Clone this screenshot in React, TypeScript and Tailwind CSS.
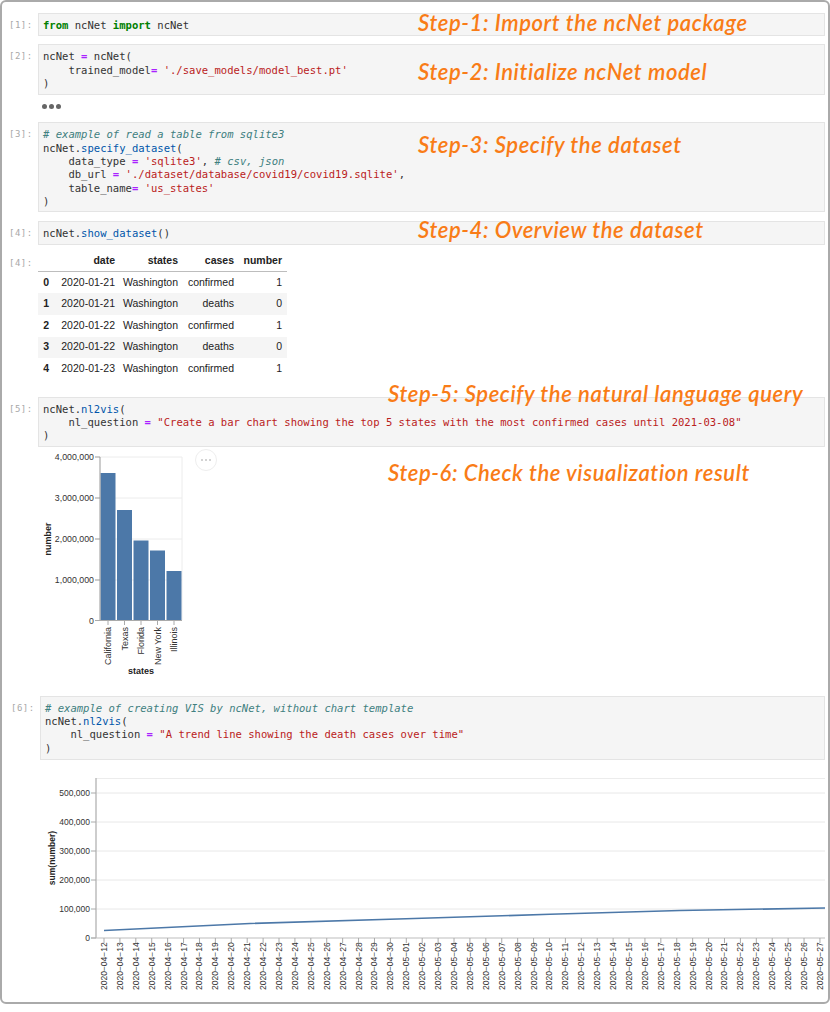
import type { ReactNode } from "react";

const rows = [
  ["0", "2020-01-21", "Washington", "confirmed", "1"],
  ["1", "2020-01-21", "Washington", "deaths", "0"],
  ["2", "2020-01-22", "Washington", "confirmed", "1"],
  ["3", "2020-01-22", "Washington", "deaths", "0"],
  ["4", "2020-01-23", "Washington", "confirmed", "1"],
];

const steps = [
  { text: "Step-1: Import the ncNet package", pos: "left-[418px] top-[10px]" },
  { text: "Step-2: Initialize ncNet model", pos: "left-[418px] top-[59px]" },
  { text: "Step-3: Specify the dataset", pos: "left-[418px] top-[132px]" },
  { text: "Step-4: Overview the dataset", pos: "left-[418px] top-[217px]" },
  { text: "Step-5: Specify the natural language query", pos: "left-[388px] top-[381px]" },
  { text: "Step-6: Check the visualization result", pos: "left-[388px] top-[460px]" },
];

const bars = [
  { name: "California", x: 100.5, w: 15, y: 473 },
  { name: "Texas", x: 117, w: 15, y: 510 },
  { name: "Florida", x: 133.5, w: 15, y: 540.5 },
  { name: "New York", x: 150, w: 15, y: 550.5 },
  { name: "Illinois", x: 166.5, w: 15, y: 571 },
];

// 04-12 .. 05-27
const dates: string[] = [];
for (let i = 0; i < 46; i++) {
  const d = new Date(Date.UTC(2020, 3, 12 + i));
  dates.push(d.toISOString().slice(0, 10).replace(/-/g, "\u2212"));
}

function Kw({ children }: { children: ReactNode }) {
  return <span className="font-bold text-[#008000]">{children}</span>;
}
function Op({ children }: { children: ReactNode }) {
  return <span className="font-bold text-[#aa22ff]">{children}</span>;
}
function Str({ children }: { children: ReactNode }) {
  return <span className="text-[#ba2121]">{children}</span>;
}
function Cm({ children }: { children: ReactNode }) {
  return <span className="italic text-[#408080]">{children}</span>;
}
function Fn({ children }: { children: ReactNode }) {
  return <span className="text-[#0055aa]">{children}</span>;
}

function Prompt({ n }: { n: number }) {
  return <div className="w-[36px] shrink-0 pt-[7px] pl-[7px] font-['DejaVu_Sans_Mono'] text-[9px] leading-[11px] tracking-[0.5px] text-[#a8a8a8]">[{n}]:</div>;
}

function Cell({ n, className, pad, children }: { n: number; className?: string; pad?: string; children: ReactNode }) {
  return (
    <div className={`flex ${className || ""}`}>
      <Prompt n={n} />
      <pre className={`flex-1 border border-[#e4e4e4] bg-[#f5f5f5] px-[4px] pt-[5px] font-['DejaVu_Sans_Mono'] text-[10.55px] leading-[13.35px] text-[#333333] ${pad || "pb-[3px]"}`}>{children}</pre>
    </div>
  );
}

function BarChart() {
  return (
    <svg width="200" height="236" viewBox="30 445 200 236" className="block font-['Liberation_Sans'] text-[#333]">
      {[457, 498, 539, 580].map((y) => <line key={y} x1="100" x2="182" y1={y} y2={y} stroke="#ececec" strokeWidth="1" />)}
      <line x1="182" x2="182" y1="457" y2="620" stroke="#ececec" />
      {bars.map((b) => <rect key={b.name} x={b.x} y={b.y} width={b.w} height={620 - b.y} fill="#4c78a8" />)}
      <line x1="100" x2="100" y1="457" y2="620" stroke="#999" />
      <line x1="95" x2="182" y1="620.5" y2="620.5" stroke="#aaa" />
      {[457, 498, 539, 580].map((y) => <line key={y} x1="95" x2="100" y1={y} y2={y} stroke="#999" />)}
      {["4,000,000", "3,000,000", "2,000,000", "1,000,000", "0"].map((t, i) => (
        <text key={t} x="94" y={460 + i * 40.9} textAnchor="end" fontSize="8.8" fill="#333">{t}</text>
      ))}
      {bars.map((b) => <line key={b.name} x1={b.x + 7.5} x2={b.x + 7.5} y1="620" y2="625" stroke="#aaa" />)}
      {bars.map((b) => (
        <text key={b.name} transform={`translate(${b.x + 10.5},627) rotate(-90)`} textAnchor="end" fontSize="9" fill="#333">{b.name}</text>
      ))}
      <text transform="translate(51,539) rotate(-90)" textAnchor="middle" fontSize="9" fontWeight="700" fill="#222">number</text>
      <text x="141" y="674" textAnchor="middle" fontSize="9" fontWeight="700" fill="#222">states</text>
    </svg>
  );
}

function LineChart() {
  const ys = [793, 822, 851, 880, 909, 938];
  return (
    <svg width="790" height="232" viewBox="40 776 790 232" className="block font-['Liberation_Sans']">
      <line x1="96" x2="825" y1="778.5" y2="778.5" stroke="#ececec" />
      {ys.slice(0, 5).map((y) => <line key={y} x1="96" x2="825" y1={y} y2={y} stroke="#e8e8e8" />)}
      <line x1="96" x2="96" y1="778" y2="938" stroke="#bdbdbd" strokeWidth="1.5" />
      <line x1="91" x2="825" y1="938" y2="938" stroke="#bdbdbd" />
      {ys.map((y, i) => (
        <g key={y}>
          <line x1="91" x2="96" y1={y} y2={y} stroke="#aaa" />
          <text x="90" y={y + 3} textAnchor="end" fontSize="8.5" fill="#333">{(500000 - i * 100000).toLocaleString("en-US")}</text>
        </g>
      ))}
      <text transform="translate(55,858) rotate(-90)" textAnchor="middle" fontSize="8.5" fontWeight="700" fill="#222">sum(number)</text>
      {dates.map((d, i) => (
        <g key={d}>
          <line x1={104 + i * 15.91} x2={104 + i * 15.91} y1="938" y2="943" stroke="#aaa" />
          <text transform={`translate(${107 + i * 15.91},990) rotate(-90)`} fontSize="8.5" fill="#333">{d}</text>
        </g>
      ))}
      <polyline points="104,930.5 250,923.5 406,918.7 550,914.3 680,910.5 825,908" fill="none" stroke="#4c78a8" strokeWidth="1.6" />
    </svg>
  );
}

export default function App() {
  return (
    <div className="relative h-[1012px] w-[830px] overflow-hidden bg-white">
      <div className="h-[1004px] rounded-[6px] border-2 border-[#aaaaaa] pt-[11px] pr-[3px]">
        <Cell n={1}>
          <Kw>from</Kw> ncNet <Kw>import</Kw> ncNet
        </Cell>

        <Cell n={2} className="mt-[8px]" pad="pb-[4px]">
          {"ncNet "}<Op>=</Op>{" ncNet(\n    trained_model"}<Op>=</Op> <Str>'./save_models/model_best.pt'</Str>{"\n)"}
        </Cell>

        <div className="ml-[40px] mt-[9px] flex h-[5px] gap-[2px]">
          <span className="size-[5px] rounded-full bg-[#666666]" />
          <span className="size-[5px] rounded-full bg-[#666666]" />
          <span className="size-[5px] rounded-full bg-[#666666]" />
        </div>

        <Cell n={3} className="mt-[13px]">
          <Cm># example of read a table from sqlite3</Cm>{"\nncNet."}<Fn>specify_dataset</Fn>{"(\n    data_type "}<Op>=</Op> <Str>'sqlite3'</Str>, <Cm># csv, json</Cm>{"\n    db_url "}<Op>=</Op> <Str>'./dataset/database/covid19/covid19.sqlite'</Str>{",\n    table_name"}<Op>=</Op> <Str>'us_states'</Str>{"\n)"}
        </Cell>

        <Cell n={4} className="mt-[9px]">
          ncNet.<Fn>show_dataset</Fn>()
        </Cell>

        <div className="mt-[6px] flex">
          <Prompt n={4} />
          <table className="w-[249px] table-fixed border-collapse font-['Liberation_Sans'] text-[10.5px] text-[#222222]">
            <colgroup>
              <col className="w-[16px]" />
              <col className="w-[66px]" />
              <col className="w-[63px]" />
              <col className="w-[56px]" />
              <col className="w-[48px]" />
            </colgroup>
            <thead>
              <tr className="h-[21px] border-b border-[#bdbdbd] text-right font-bold">
                <th />
                <th className="pr-[5px]">date</th>
                <th className="pr-[5px]">states</th>
                <th className="pr-[5px]">cases</th>
                <th className="pr-[5px]">number</th>
              </tr>
            </thead>
            <tbody>
              {rows.map((r, i) => (
                <tr key={r[0]} className={`h-[21.6px] text-right ${i % 2 === 1 ? "bg-[#f5f5f5]" : ""}`}>
                  <td className="pr-[5px] font-bold">{r[0]}</td>
                  <td className="pr-[5px]">{r[1]}</td>
                  <td className="pr-[5px]">{r[2]}</td>
                  <td className="pr-[5px]">{r[3]}</td>
                  <td className="pr-[5px]">{r[4]}</td>
                </tr>
              ))}
            </tbody>
          </table>
        </div>

        <Cell n={5} className="mt-[17px]">
          ncNet.<Fn>nl2vis</Fn>{"(\n    nl_question "}<Op>=</Op> <Str>"Create a bar chart showing the top 5 states with the most confirmed cases until 2021-03-08"</Str>{"\n)"}
        </Cell>

        <div className="relative ml-[28px] mt-[-2px] h-[236px]">
          <BarChart />
          <div className="absolute left-[165px] top-[4px] flex h-[22px] w-[22px] items-center justify-center gap-[1.5px] rounded-full border border-[#eeeeee] bg-white">
            <span className="size-[2.5px] rounded-full bg-[#c4c4c4]" />
            <span className="size-[2.5px] rounded-full bg-[#c4c4c4]" />
            <span className="size-[2.5px] rounded-full bg-[#c4c4c4]" />
          </div>
        </div>

        <Cell n={6} className="ml-[2px] mt-[15px]" pad="pb-[4px]">
          <Cm># example of creating VIS by ncNet, without chart template</Cm>{"\nncNet."}<Fn>nl2vis</Fn>{"(\n    nl_question "}<Op>=</Op> <Str>"A trend line showing the death cases over time"</Str>{"\n)"}
        </Cell>

        <div className="ml-[38px] mt-[16px]">
          <LineChart />
        </div>
      </div>

      {steps.map((s) => (
        <div key={s.text} className={`absolute whitespace-nowrap font-['Lato'] text-[22px] font-semibold italic leading-[26px] tracking-[0.6px] text-[#f97c17] ${s.pos}`}>{s.text}</div>
      ))}
    </div>
  );
}
